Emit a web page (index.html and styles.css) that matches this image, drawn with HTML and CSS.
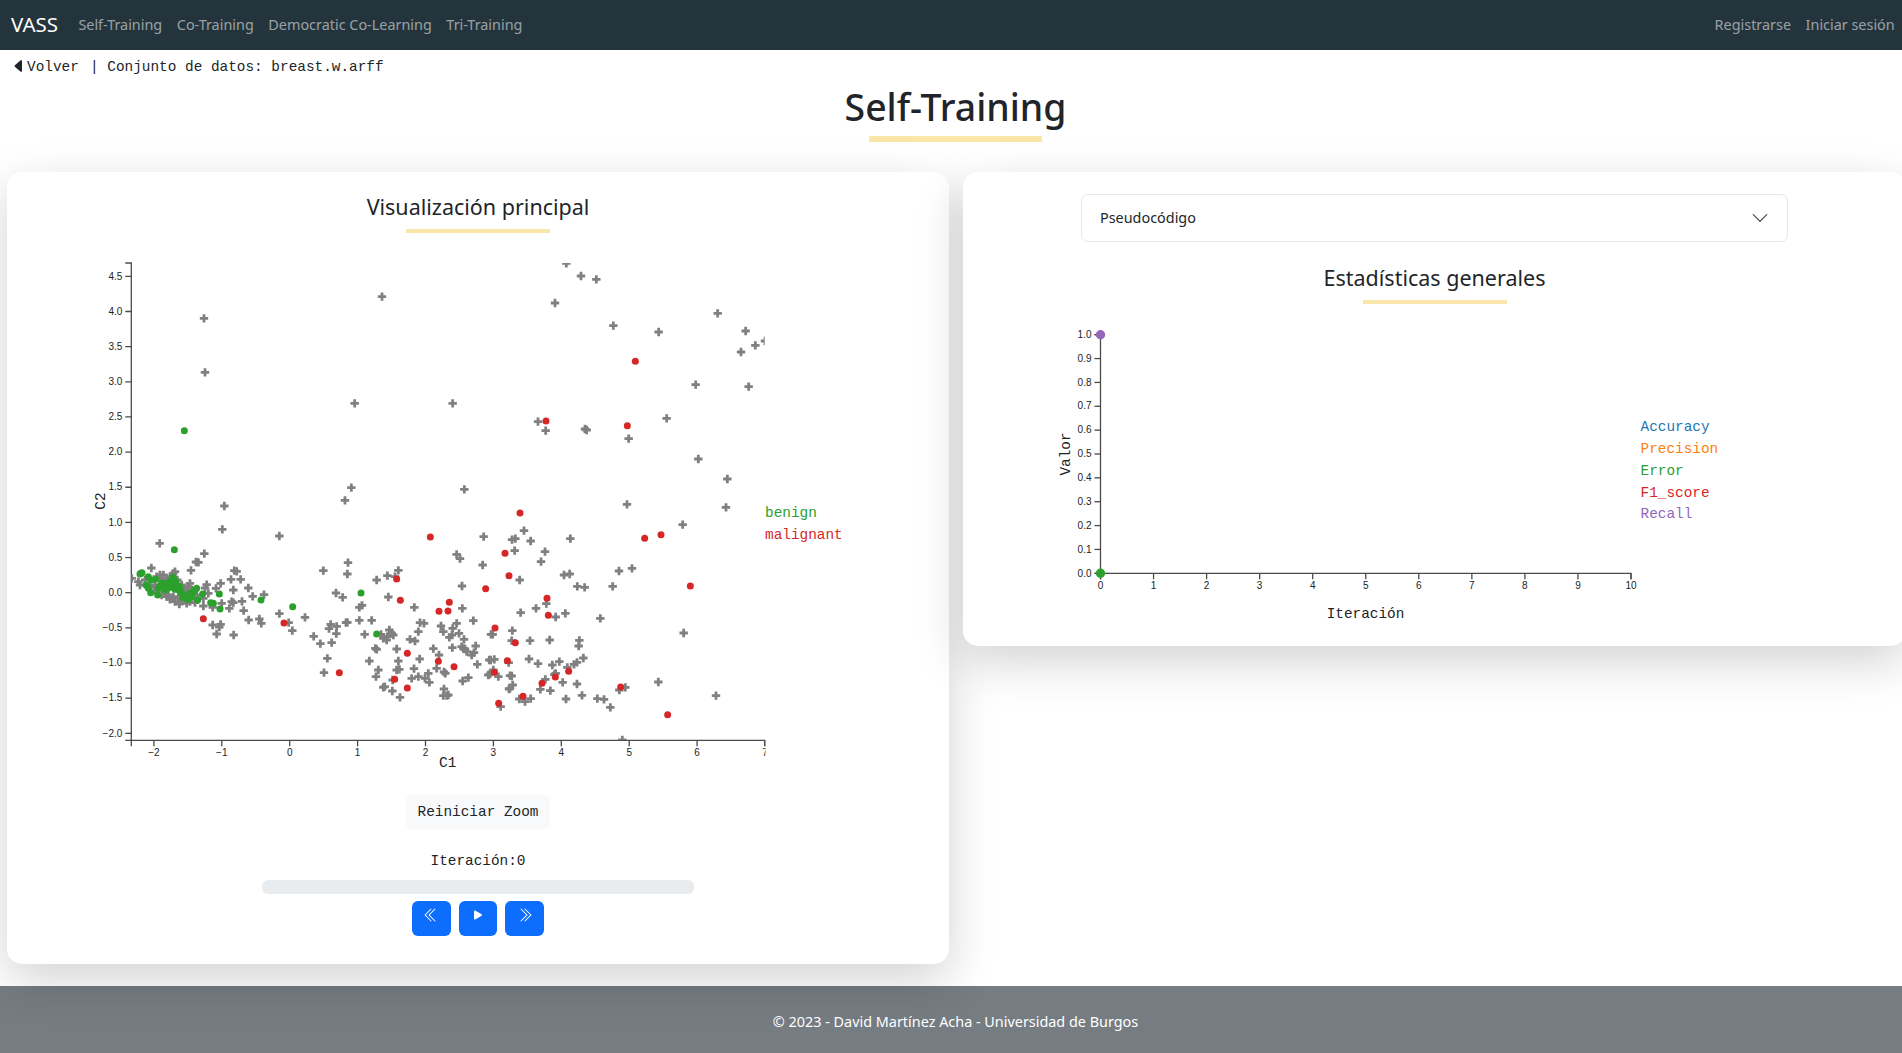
FILE: index.html
```html
<!DOCTYPE html>
<html lang="es">
<head>
  <meta charset="UTF-8" />
  <title>Self-Training</title>
  <link rel="stylesheet" href="styles.css">
</head>
<body>
  <nav class="navbar">
    <a class="brand" href="#">VASS</a>
    <a class="nav-link" href="#">Self-Training</a>
    <a class="nav-link" href="#">Co-Training</a>
    <a class="nav-link" href="#">Democratic Co-Learning</a>
    <a class="nav-link" href="#">Tri-Training</a>
    <span class="nav-spacer"></span>
    <a class="nav-link" href="#">Registrarse</a>
    <a class="nav-link" href="#">Iniciar sesión</a>
  </nav>

  <main class="content">
    <div class="back-line">
      <svg class="back-icon" viewBox="0 0 16 16" fill="currentColor"><path d="m3.86 8.753 5.482 4.796c.646.566 1.658.106 1.658-.753V3.204a1 1 0 0 0-1.659-.753l-5.48 4.796a1 1 0 0 0 0 1.506z"/></svg>
      <span class="back-label">Volver</span>
      <span>| Conjunto de datos: breast.w.arff</span>
    </div>

    <h1 class="page-title">Self-Training</h1>
    <div class="underline underline-wide"></div>

    <div class="cards">
      <section class="card card-main">
        <h2 class="card-title">Visualización principal</h2>
        <div class="underline"></div>

        <svg id="scatter" class="chart-scatter" viewBox="88 255 770 520">
          <text class="axis-title" x="447.7" y="767" text-anchor="middle">C1</text>
          <text class="axis-title" transform="translate(105,501) rotate(-90)" text-anchor="middle">C2</text>
          <text class="legend-item legend-green" x="765" y="517">benign</text>
          <text class="legend-item legend-red" x="765" y="539">malignant</text>
        </svg>

        <button class="btn-reset" type="button">Reiniciar Zoom</button>
        <div class="iteration">Iteración:0</div>
        <div class="progress"></div>

        <div class="player">
          <button class="btn-player" type="button">
            <svg viewBox="0 0 16 16" fill="currentColor"><path fill-rule="evenodd" d="M8.354 1.646a.5.5 0 0 1 0 .708L2.707 8l5.647 5.646a.5.5 0 0 1-.708.708l-6-6a.5.5 0 0 1 0-.708l6-6a.5.5 0 0 1 .708 0z"/><path fill-rule="evenodd" d="M12.354 1.646a.5.5 0 0 1 0 .708L6.707 8l5.647 5.646a.5.5 0 0 1-.708.708l-6-6a.5.5 0 0 1 0-.708l6-6a.5.5 0 0 1 .708 0z"/></svg>
          </button>
          <button class="btn-player" type="button">
            <svg viewBox="0 0 16 16" fill="currentColor"><path d="m11.596 8.697-6.363 3.692c-.54.313-1.233-.066-1.233-.697V4.308c0-.63.692-1.01 1.233-.696l6.363 3.692a.802.802 0 0 1 0 1.393z"/></svg>
          </button>
          <button class="btn-player" type="button">
            <svg viewBox="0 0 16 16" fill="currentColor"><path fill-rule="evenodd" d="M3.646 1.646a.5.5 0 0 1 .708 0l6 6a.5.5 0 0 1 0 .708l-6 6a.5.5 0 0 1-.708-.708L9.293 8 3.646 2.354a.5.5 0 0 1 0-.708z"/><path fill-rule="evenodd" d="M7.646 1.646a.5.5 0 0 1 .708 0l6 6a.5.5 0 0 1 0 .708l-6 6a.5.5 0 0 1-.708-.708L13.293 8 7.646 2.354a.5.5 0 0 1 0-.708z"/></svg>
          </button>
        </div>
      </section>

      <section class="card card-stats">
        <div class="accordion">
          <span>Pseudocódigo</span>
          <svg class="accordion-icon" viewBox="0 0 16 16" fill="#444"><path fill-rule="evenodd" d="M1.646 4.646a.5.5 0 0 1 .708 0L8 10.293l5.646-5.647a.5.5 0 0 1 .708.708l-6 6a.5.5 0 0 1-.708 0l-6-6a.5.5 0 0 1 0-.708z"/></svg>
        </div>

        <h2 class="card-title card-title-stats">Estadísticas generales</h2>
        <div class="underline"></div>

        <svg id="stats" class="chart-stats" viewBox="1050 325 700 300">
          <text class="axis-title" x="1365.5" y="618" text-anchor="middle">Iteración</text>
          <text class="axis-title" transform="translate(1070,454) rotate(-90)" text-anchor="middle">Valor</text>
          <text class="legend-item legend-blue" x="1640.5" y="431">Accuracy</text>
          <text class="legend-item legend-orange" x="1640.5" y="453">Precision</text>
          <text class="legend-item legend-green" x="1640.5" y="474.5">Error</text>
          <text class="legend-item legend-red" x="1640.5" y="496.5">F1_score</text>
          <text class="legend-item legend-purple" x="1640.5" y="518">Recall</text>
        </svg>
      </section>
    </div>
  </main>

  <footer class="footer">© 2023 - David Martínez Acha - Universidad de Burgos</footer>

  <script src="chart.js"></script>
</body>
</html>
```

FILE: styles.css
```css
* {
  box-sizing: border-box;
}

html,
body {
  margin: 0;
  overflow-x: hidden;
}

body {
  display: flex;
  flex-direction: column;
  min-height: 100vh;
  font-family: "Noto Sans", sans-serif;
  color: #212529;
  background-color: #fff;
}

.navbar {
  display: flex;
  align-items: center;
  height: 50px;
  padding: 0 0 2px 11px;
  background-color: #24343c;
}

.brand {
  margin-right: 13px;
  font-size: 20.5px;
  color: #fff;
  text-decoration: none;
}

.nav-link {
  padding: 0 7.3px;
  font-size: 14.4px;
  color: rgba(255, 255, 255, 0.55);
  text-decoration: none;
}

.nav-spacer {
  flex: 1;
}

/* el contenido y el pie son algo mas anchos que la ventana */
.content,
.footer {
  width: 1911px;
}

.content {
  flex: 1;
}

.back-line {
  display: flex;
  align-items: center;
  height: 22px;
  margin-top: 6px;
  padding-left: 11px;
  font-family: "Liberation Mono", monospace;
  font-size: 14.4px;
  white-space: pre;
}

.back-icon {
  width: 16px;
  height: 16px;
  margin-top: -3px;
}

.back-label {
  margin-right: 11.2px;
}

.page-title {
  margin: 7px 0 0;
  height: 44px;
  font-size: 37.4px;
  font-weight: 500;
  line-height: 44px;
  text-align: center;
}

.underline {
  width: 144px;
  height: 4px;
  margin: 8px auto 0;
  background-color: #fbe6a9;
}

.underline-wide {
  width: 173px;
  height: 6px;
  margin-top: 7px;
}

.cards {
  display: grid;
  grid-template-columns: 942px 943px;
  column-gap: 14px;
  align-items: start;
  margin-top: 30px;
  padding-left: 7px;
}

.card {
  position: relative;
  border-radius: 15px;
  background-color: #fff;
  box-shadow: 0 16px 48px rgba(0, 0, 0, 0.175);
}

.card-main {
  display: flex;
  flex-direction: column;
  align-items: center;
  height: 792px;
  padding-top: 22px;
}

.card-stats {
  height: 474px;
  padding-top: 22px;
}

.card-title {
  height: 27px;
  margin: 0;
  font-size: 21.5px;
  font-weight: 400;
  line-height: 26px;
  text-align: center;
}

.card-title-stats {
  margin-top: 23px;
}

.chart-scatter {
  display: block;
  align-self: flex-start;
  width: 770px;
  height: 520px;
  margin: 22px 0 0 81px;
}

.chart-stats {
  display: block;
  width: 700px;
  height: 300px;
  margin: 21px 0 0 87px;
}

.axis-line {
  fill: none;
  stroke: #4a4a4a;
  stroke-width: 1.3;
}

.tick-label {
  font-family: "Liberation Sans", sans-serif;
  font-size: 10px;
  fill: #222;
}

.axis-title,
.legend-item {
  font-family: "Liberation Mono", monospace;
  font-size: 14.4px;
}

.axis-title {
  fill: #222;
}

.legend-blue {
  fill: #1f77b4;
}

.legend-orange {
  fill: #ff7f0e;
}

.legend-green {
  fill: #2ca02c;
}

.legend-red {
  fill: #d62728;
}

.legend-purple {
  fill: #9467bd;
}

.btn-reset {
  width: 144px;
  height: 34px;
  margin-top: 20px;
  padding: 0;
  border: none;
  border-radius: 6px;
  background-color: #f8f9fa;
  font-family: "Liberation Mono", monospace;
  font-size: 14.4px;
  color: #212529;
}

.iteration {
  height: 22px;
  margin-top: 21px;
  font-family: "Liberation Mono", monospace;
  font-size: 14.4px;
  line-height: 22px;
}

.progress {
  width: 432px;
  height: 14px;
  margin-top: 8px;
  border-radius: 6px;
  background-color: #e9ecef;
}

.player {
  display: flex;
  gap: 8px;
  margin-top: 7px;
}

.btn-player {
  display: flex;
  justify-content: center;
  width: 38.7px;
  height: 35px;
  padding: 6px 0 0;
  border: none;
  border-radius: 6px;
  background-color: #0d6efd;
  color: #fff;
}

.btn-player svg {
  width: 16px;
  height: 16px;
}

.accordion {
  display: flex;
  align-items: center;
  justify-content: space-between;
  width: 707px;
  height: 48px;
  margin-left: 118px;
  padding: 0 18px 2px 18px;
  border: 1px solid #e4e7ea;
  border-radius: 7px;
  font-size: 14.4px;
}

.accordion-icon {
  width: 18px;
  height: 18px;
  margin-top: 2px;
}

.footer {
  display: flex;
  align-items: center;
  justify-content: center;
  height: 67px;
  padding-top: 3px;
  background-color: #757c82;
  font-size: 14.4px;
  color: #fff;
}
```

FILE: chart.js
```js
const SVG_NS = "http://www.w3.org/2000/svg";

// puntos leidos en pixeles de pagina, agrupados por zona del grafico
const zoneTop = { dx: 90, dy: 250 };
const zoneTopRight = { dx: 490, dy: 250 };
const zoneBottom = { dx: 90, dy: 500 };
const zoneBottomRight = { dx: 490, dy: 500 };

const unlabeled = [
  [zoneTop, [[342,205],[345,367],[876,140],[794,460],[1088,460],[784,713],[1123,718],[765,751],[403,768]]],
  [zoneTopRight, [[229,40],[273,78],[319,88],[195,159],[370,227],[506,246],[683,190],[767,243],[796,286],[753,306],[825,273],[617,404],[776,410],[144,515],[167,542],[285,537],[290,540],[530,505],[416,566],[625,627],[712,687],[411,763],[708,772]]],
  [zoneBottom, [[397,88],[209,130],[568,108],[343,161],[318,186],[325,187],[303,211],[184,204],[433,212],[440,214],[423,238],[452,238],[475,264],[430,270],[392,250],[350,254],[345,264],[378,265],[488,289],[456,304],[522,284],[425,305],[418,325],[430,308],[395,310],[368,322],[340,318],[461,332],[476,360],[508,357],[514,370],[392,373],[368,375],[380,402],[431,405],[388,381],[568,341],[596,368],[607,392],[645,352],[671,409],[691,431],[725,428],[712,475],[702,518],[740,379],[739,401],[722,373],[717,386],[738,279],[758,292],[700,212],[774,188],[772,222],[808,322],[816,316],[808,361],[768,368],[772,367],[845,361],[824,403],[838,483],[856,445],[860,448],[865,510],[858,530],[880,562],[884,560],[907,573],[908,540],[930,592],[920,447],[925,483],[920,510],[928,508],[972,506],[965,535],[985,530],[1005,535],[1015,520],[1018,547],[1040,505],[1062,516],[1066,520],[1062,567],[1060,587],[1070,587],[1075,585],[1118,543],[1135,533],[1162,493],[1195,525],[1198,480],[989,477],[1047,465],[1030,446],[1087,443],[1115,440],[1125,447],[1120,445],[1130,455],[1145,465],[1152,458],[1157,438],[1122,418],[1107,400],[1078,412],[1086,405],[1100,370],[1150,362],[1088,385],[1060,395],[1053,378],[985,395],[990,368],[1002,370],[960,418],[975,423],[973,322],[895,291],[880,415],[873,403],[890,420],[898,390],[905,400],[892,410],[910,405],[860,240],[892,227],[915,230],[925,211],[1100,163],[1110,176],[1116,258],[1117,325],[1178,195],[1181,110],[1203,403],
    [125,235],[145,245],[150,255],[200,230],[215,240],[230,235],[250,220],[255,215],[240,250],[225,280],[205,270],[215,285],[235,285],[250,290],[265,295],[268,312],[290,310],[315,308],[280,265],[295,260],[300,250],[285,280],[300,290],[310,285],[325,295],[270,270],
    [165,240],[180,262],[195,272],[220,225],[240,230],[262,240],[275,255],[290,270],[305,270],[255,305],[275,300],[240,298],[195,255],[210,225],[230,290],[300,305],[340,295],[355,280],[320,285]]],
  [zoneBottomRight, [[578,74],[102,92],[66,119],[76,116],[122,123],[241,116],[74,152],[165,155],[153,185],[387,213],[426,205],[222,225],[239,222],[89,240],[262,259],[284,262],[368,259],[169,311],[138,325],[92,338],[226,340],[197,351],[331,355],[581,399],[67,392],[8,403],[65,422],[120,422],[179,420],[268,421],[266,438],[117,477],[144,491],[56,488],[187,495],[208,485],[280,474],[261,487],[252,493],[232,502],[2,480],[13,478],[10,510],[25,530],[60,527],[65,528],[197,520],[193,524],[0,522],[218,547],[261,552],[166,538],[68,555],[60,565],[57,567],[151,568],[181,572],[505,546],[406,562],[388,570],[88,597],[105,605],[122,596],[228,597],[276,586],[322,596],[342,598],[361,622],[32,620],[678,587],[397,720]]],
];

const benign = [
  [zoneTop, [[283,542]]],
  [zoneBottom, [[253,149],[152,220],[175,230],[183,240],[197,238],[168,255],[175,265],[182,278],[203,285],[205,265],[215,250],[218,262],[235,262],[228,270],[240,245],[250,232],[255,255],[262,268],[270,265],[275,280],[285,295],[295,298],[300,280],[310,275],[320,265],[323,300],[338,282],[362,308],[370,310],[390,327],[388,282],[513,300],[608,320],[813,279],[860,402],
    [245,240],[240,262],[255,268],[270,275],[280,285],[292,298],[305,290],[225,255],[210,258],[230,250],[262,262],[150,222],[156,218],[172,258],[248,250],[258,245],[268,258],[248,262],[222,268],[278,292],[315,270]]],
];

const malignant = [
  [zoneTopRight, [[436,334],[168,513],[412,527]]],
  [zoneBottom, [[340,356],[582,369],[748,518],[920,237],[931,301],[952,460],[914,538],[952,564],[1021,111],[1047,334],[1074,333],[1078,307],[1045,484],[1092,500],[1187,266]]],
  [zoneBottomRight, [[90,39],[464,115],[513,104],[45,160],[57,227],[601,258],[171,295],[175,346],[15,384],[76,428],[52,482],[13,517],[236,514],[196,531],[156,550],[392,561],[99,589],[26,610],[533,644]]],
];

function el(parent, name, attrs, text) {
  const node = document.createElementNS(SVG_NS, name);
  Object.keys(attrs).forEach((key) => node.setAttribute(key, attrs[key]));
  if (text !== undefined) node.textContent = text;
  parent.appendChild(node);
  return node;
}

function eachPoint(groups, draw) {
  groups.forEach(([zone, points]) => {
    points.forEach(([x, y]) => draw(zone.dx + x / 3, zone.dy + y / 3));
  });
}

function leftAxis(svg, x, top, bottom, ticks) {
  el(svg, "path", { class: "axis-line", d: `M${x - 6},${top}H${x}V${bottom}H${x - 6}` });
  ticks.forEach(([y, label]) => {
    el(svg, "line", { class: "axis-line", x1: x - 6, x2: x, y1: y, y2: y });
    el(svg, "text", { class: "tick-label", x: x - 9, y: y + 3.2, "text-anchor": "end" }, label);
  });
}

function bottomAxis(svg, y, left, right, ticks) {
  el(svg, "path", { class: "axis-line", d: `M${left},${y + 6}V${y}H${right}V${y + 6}` });
  ticks.forEach(([x, label]) => {
    el(svg, "line", { class: "axis-line", x1: x, x2: x, y1: y, y2: y + 6 });
    el(svg, "text", { class: "tick-label", x: x, y: y + 16, "text-anchor": "middle" }, label);
  });
}

function signed(value, digits) {
  return (value < 0 ? "\u2212" : "") + Math.abs(value).toFixed(digits);
}

function drawScatter() {
  const svg = document.getElementById("scatter");
  const defs = el(svg, "defs", {});
  const clip = el(defs, "clipPath", { id: "plotArea" });
  el(clip, "rect", { x: 131.3, y: 263, width: 633.4, height: 477 });
  const frame = el(defs, "clipPath", { id: "axisArea" });
  el(frame, "rect", { x: 88, y: 255, width: 677.6, height: 520 });

  const yTicks = [];
  for (let v = -2; v <= 4.5; v += 0.5) {
    yTicks.push([592.7 - v * 70.3, signed(v, 1)]);
  }
  const xTicks = [];
  for (let v = -2; v <= 7; v += 1) {
    xTicks.push([289.7 + v * 67.9, signed(v, 0)]);
  }
  const axes = el(svg, "g", { "clip-path": "url(#axisArea)" });
  leftAxis(axes, 131.3, 263, 740.3, yTicks);
  bottomAxis(axes, 740.3, 131.3, 764.7, xTicks);

  const plot = el(svg, "g", { "clip-path": "url(#plotArea)" });
  // cruz = sin etiqueta, mismo trazo que d3.symbolCross
  eachPoint(unlabeled, (x, y) => {
    el(plot, "path", {
      fill: "#808080",
      d: `M${x - 4.2},${y - 1.4}h2.8v-2.8h2.8v2.8h2.8v2.8h-2.8v2.8h-2.8v-2.8h-2.8z`,
    });
  });
  eachPoint(benign, (x, y) => el(plot, "circle", { cx: x, cy: y, r: 3.5, fill: "#2ca02c" }));
  eachPoint(malignant, (x, y) => el(plot, "circle", { cx: x, cy: y, r: 3.5, fill: "#d62728" }));
}

function drawStats() {
  const svg = document.getElementById("stats");
  const yTicks = [];
  for (let i = 0; i <= 10; i += 1) {
    yTicks.push([573.3 - i * 23.86, (i / 10).toFixed(1)]);
  }
  const xTicks = [];
  for (let i = 0; i <= 10; i += 1) {
    xTicks.push([1100.5 + i * 53.05, String(i)]);
  }
  leftAxis(svg, 1100.5, 334.7, 573.3, yTicks);
  bottomAxis(svg, 573.3, 1100.5, 1631, xTicks);

  el(svg, "circle", { cx: 1100.5, cy: 334.7, r: 4.7, fill: "#9467bd" });
  el(svg, "circle", { cx: 1100.5, cy: 573.3, r: 4.7, fill: "#2ca02c" });
}

drawScatter();
drawStats();
```
